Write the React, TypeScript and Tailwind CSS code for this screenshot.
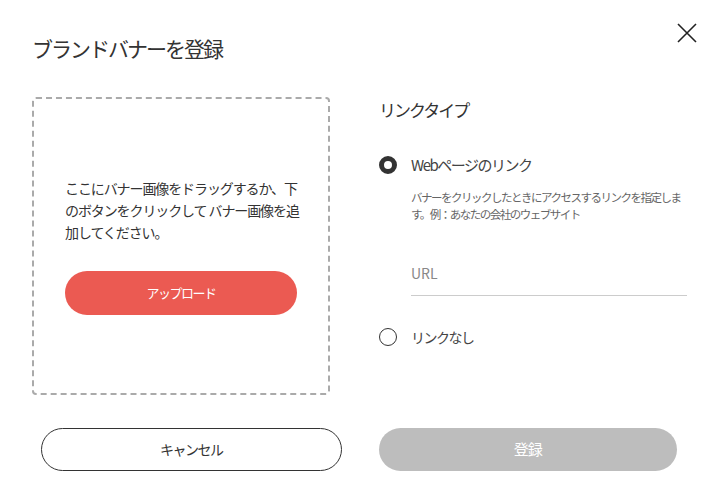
const font = { fontFamily: '"Noto Sans CJK JP", "Noto Sans", sans-serif' };

export default function App() {
  return (
    <div
      className="relative w-[719px] h-[501px] bg-white text-[#333] overflow-hidden"
      style={font}
    >
      <button className="absolute left-[677px] top-[23px]" aria-label="close">
        <svg width="20" height="20" viewBox="0 0 20 20" fill="none" stroke="#222" strokeWidth="1.6">
          <path d="M1 1L19 19M19 1L1 19" />
        </svg>
      </button>

      <div className="pl-[32px] pr-[32px] pt-[33px]">
        <h1 className="text-[21px] leading-[30px] font-normal tracking-[-2px] text-[#333]">
          ブランドバナーを登録
        </h1>

        <div className="flex mt-[34px] gap-[49px]">
          {/* drop area */}
          <div className="w-[298px] h-[298px] border-2 border-dashed border-[#aaa] rounded-[4px] flex flex-col justify-center px-[31px]">
            <p className="text-[14px] leading-[22px] tracking-[-1.1px] text-[#333] whitespace-nowrap">
              ここにバナー画像をドラッグするか、下
              <br />
              のボタンをクリックして バナー画像を追
              <br />
              加してください。
            </p>
            <button className="mt-[28px] h-[44px] w-full rounded-full bg-[#eb5a52] text-white text-[13px] tracking-[-1.5px]">
              アップロード
            </button>
          </div>

          {/* link type */}
          <div className="flex-1 pt-[1px]">
            <h2 className="text-[17px] leading-[24px] tracking-[-2px] text-[#333]">リンクタイプ</h2>

            <label className="flex items-center gap-[14px] mt-[32px]">
              <span className="w-[18px] h-[18px] rounded-full border-[5px] border-[#333] bg-white" />
              <span className="text-[15px] leading-[22px] tracking-[-1.5px] text-[#444]">
                Webページのリンク
              </span>
            </label>
            <p className="ml-[32px] mt-[13px] text-[11.5px] leading-[17px] tracking-[-1.5px] text-[#666] whitespace-nowrap">
              バナーをクリックしたときにアクセスするリンクを指定しま
              <br />
              す。例：あなたの会社のウェブサイト
            </p>

            <div className="ml-[32px] mt-[37px] border-b border-[#ccc] pb-[11px]">
              <input
                placeholder="URL"
                className="w-full text-[14px] leading-[20px] outline-none placeholder:text-[#888]"
                style={font}
              />
            </div>

            <label className="flex items-center gap-[14px] mt-[30px]">
              <span className="w-[18px] h-[18px] rounded-full border-[1.5px] border-[#333] bg-white" />
              <span className="text-[14px] leading-[22px] tracking-[-1.5px] text-[#444]">リンクなし</span>
            </label>
          </div>
        </div>

        <div className="flex gap-[37px] mt-[33px] pl-[9px] pr-[10px]">
          <button className="flex-1 h-[43px] rounded-full border border-[#333] bg-white text-[14px] tracking-[-1.5px] text-[#333]">
            キャンセル
          </button>
          <button className="flex-1 h-[43px] rounded-full bg-[#bdbdbd] text-[15px] tracking-[-1px] text-white">
            登録
          </button>
        </div>
      </div>
    </div>
  );
}
